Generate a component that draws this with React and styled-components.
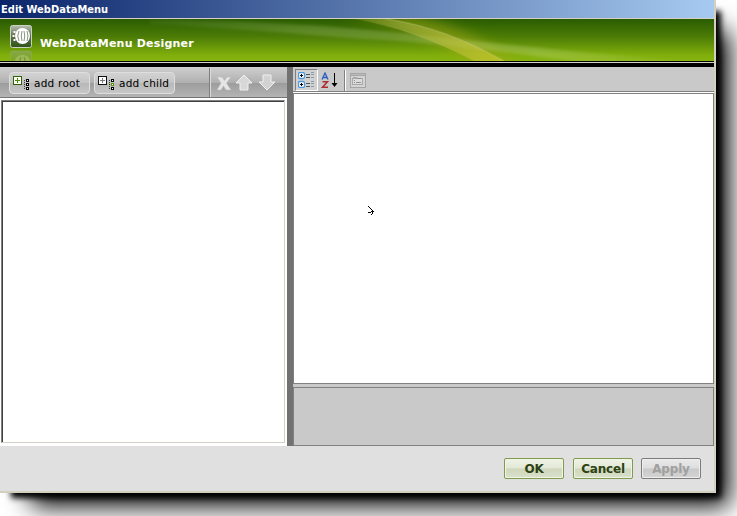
import React from "react";
import styled, { createGlobalStyle, css } from "styled-components";

const Global = createGlobalStyle`
  * { box-sizing: border-box; }
  body { margin: 0; background: #fff; overflow: hidden; font-family: "DejaVu Sans", Verdana, sans-serif; }
  svg { display: block; flex: none; }
`;

const Screen = styled.div`
  width: 737px;
  height: 516px;
  overflow: hidden;
`;

const Window = styled.main`
  width: 716px;
  height: 493px;
  display: flex;
  flex-direction: column;
  border: solid #d4d0c0;
  border-width: 0 2px 2px 0;
  background: #e0e0e0;
  box-shadow: 8px 8px 6px -3px #000, 22px 22px 24px -9px #000;
`;

const TitleBar = styled.header`
  height: 19px;
  flex: none;
  padding-left: 1px;
  border-bottom: 1px solid #d4d0c8;
  background: linear-gradient(90deg, #0a246a, #a6caf0);
  color: #fff;
  font: bold 11px/19px "DejaVu Sans Condensed", "DejaVu Sans", sans-serif;
  font-stretch: condensed;
  letter-spacing: 0.03px;
  white-space: nowrap;
`;

const Banner = styled.section`
  height: 42px;
  flex: none;
  display: grid;
  overflow: hidden;
  background: linear-gradient(#2a5c02, #4c7c06 42%, #80ae0c 86%, #86b30f);
  > * { grid-area: 1 / 1; }
`;

const BannerContent = styled.div`
  display: flex;
  gap: 7px;
  padding: 6px 0 0 9px;
`;

const BannerTitle = styled.h1`
  margin: 11px 0 0;
  color: #fff;
  font: bold 11px/16px "DejaVu Sans", sans-serif;
  letter-spacing: 0.21px;
  white-space: nowrap;
`;

const Rule = styled.div`
  height: 6px;
  flex: none;
  background: linear-gradient(#000 1px, #d4d0c8 1px 2px, #000 2px);
`;

const Workspace = styled.div`
  height: 379px;
  flex: none;
  display: grid;
  grid-template-columns: 287px 6px 421px;
`;

const TreePane = styled.section`
  display: flex;
  flex-direction: column;
  background: #fff;
`;

const TreeToolbar = styled.div`
  height: 31px;
  flex: none;
  display: flex;
  align-items: center;
  padding: 1px 0 0 9px;
  border-bottom: 1px solid #757575;
  background: linear-gradient(#cfcfcf, #b0b0b0 52%, #9c9c9c 53%, #b4b4b4);
`;

const TreeButton = styled.button`
  width: 81px;
  height: 22px;
  margin: 0 4px 0 0;
  padding: 0 0 0 3px;
  display: flex;
  align-items: center;
  gap: 4px;
  border: 1px solid #dedede;
  border-radius: 4px;
  background: linear-gradient(#d2d2d2, #c4c4c4 50%, #b8b8b8 52%, #c6c6c6);
  color: #000;
  font: 10.5px/20px "DejaVu Sans", sans-serif;
  letter-spacing: 0.25px;
  white-space: nowrap;
`;

const ToolDivider = styled.i`
  width: 2px;
  height: 29px;
  margin: 0 6px 0 30px;
  background: linear-gradient(90deg, #7e7e7e 50%, #dadada 50%);
`;

const TreeArea = styled.div`
  width: 284px;
  height: 343px;
  margin: 2px 0 0 1px;
  border: 1px solid;
  border-color: #808080 #d4d0c8 #d4d0c8 #808080;
  box-shadow: inset 1px 1px #404040;
`;

const Splitter = styled.div`
  background: #727272;
`;

const PropertyPane = styled.section`
  display: flex;
  flex-direction: column;
  background: #c9c9c9;
`;

const PropertyToolbar = styled.div`
  height: 26px;
  flex: none;
  display: flex;
  padding: 2px 0 0 2px;
  border-bottom: 1px solid #fff;
  box-shadow: inset 0 -1px #808080;
`;

const ToolSlot = styled.span`
  width: 23px;
  height: 22px;
  display: flex;
  align-items: center;
  justify-content: center;
  ${(p) =>
    p.$pressed &&
    css`
      border: 1px solid;
      border-color: #808080 #fff #fff #808080;
      background: #d1d1d1;
    `}
`;

const PropertyDivider = styled.i`
  width: 2px;
  height: 21px;
  margin: 1px 0 0 3px;
  background: linear-gradient(90deg, #808080 50%, #fff 50%);
`;

const PropertyGrid = styled.div`
  height: 291px;
  padding: 112px 0 0 74px;
  border: 1px solid #808080;
  background: #fff;
`;

const Description = styled.div`
  height: 59px;
  margin-top: 3px;
  border: 1px solid #808080;
`;

const Footer = styled.footer`
  flex: 1;
  display: flex;
  justify-content: flex-end;
  padding: 12px 13px 0 0;
`;

const FooterButton = styled.button`
  width: 60px;
  height: 21px;
  margin-left: ${(p) => p.$gap || 0}px;
  padding: 0;
  border: 1px solid ${(p) => (p.disabled ? "#7c7c7c" : "#809a50")};
  border-radius: 2px;
  background: ${(p) =>
    p.disabled
      ? "linear-gradient(#e9e9e9, #dedede 48%, #c9c9c9 52%, #d4d4d4)"
      : "linear-gradient(#f0f3e7, #e2e7d6 48%, #ced6bb 52%, #dbe1cd)"};
  box-shadow: inset 0 0 0 1px ${(p) => (p.disabled ? "#eee" : "#f0f4e4")};
  color: ${(p) => (p.disabled ? "#a0a0a0" : "#2c4212")};
  font: bold 12px/18px "DejaVu Sans", sans-serif;
  letter-spacing: -0.18px;
`;

function Swoosh() {
  return (
    <svg width="714" height="42" viewBox="0 0 714 42">
      <defs>
        <linearGradient id="gold" x1="350" y1="0" x2="500" y2="42" gradientUnits="userSpaceOnUse">
          <stop offset="0" stopColor="#c4c448" stopOpacity=".15" />
          <stop offset=".35" stopColor="#b8bc50" stopOpacity=".45" />
          <stop offset=".7" stopColor="#bcc03c" stopOpacity=".6" />
          <stop offset="1" stopColor="#c4c628" stopOpacity=".75" />
        </linearGradient>
        <linearGradient id="mist" x1="150" y1="0" x2="700" y2="0" gradientUnits="userSpaceOnUse">
          <stop offset="0" stopColor="#c8dca0" stopOpacity=".06" />
          <stop offset=".3" stopColor="#c8dca0" stopOpacity=".22" />
          <stop offset=".7" stopColor="#d8e8a8" stopOpacity=".26" />
          <stop offset="1" stopColor="#d8e8a8" stopOpacity="0" />
        </linearGradient>
        <filter id="soft" x="-10%" y="-50%" width="120%" height="200%">
          <feGaussianBlur stdDeviation="1.8" />
        </filter>
        <filter id="glow" x="-30%" y="-50%" width="160%" height="200%">
          <feGaussianBlur stdDeviation="7" />
        </filter>
      </defs>
      <path d="M340 -5 C400 5 445 22 480 48 L520 48 C480 17 440 2 404 -5Z" fill="#a2aa12" opacity=".6" filter="url(#glow)" />
      <path d="M150 0 C230 2 310 5 370 11 C430 17 500 25 560 31 C610 36 660 39 700 44 L590 44 C530 37 460 27 400 22 C320 18 240 9 150 5Z" fill="url(#mist)" filter="url(#soft)" />
      <path d="M355 0 C395 7 436 22 474 42 L504 42 C464 20 428 6 386 0Z" fill="url(#gold)" />
      <path d="M386 0 C428 6 464 20 504 42" fill="none" stroke="#d9dda0" strokeOpacity=".25" strokeWidth="1.5" />
    </svg>
  );
}

function Logo() {
  return (
    <svg width="24" height="36" viewBox="0 0 24 36">
      <defs>
        <linearGradient id="tile" x1="0" y1="0" x2="0" y2="1">
          <stop offset="0" stopColor="#b6beb0" />
          <stop offset=".5" stopColor="#5b704c" />
          <stop offset="1" stopColor="#2e5416" />
        </linearGradient>
        <linearGradient id="fade" x1="0" y1="0" x2="0" y2="1">
          <stop offset="0" stopColor="#8fa86e" stopOpacity=".65" />
          <stop offset="1" stopColor="#5a8212" stopOpacity=".15" />
        </linearGradient>
      </defs>
      <rect x="1.5" y=".5" width="21" height="22" rx="2" fill="url(#tile)" stroke="#cbd2c3" />
      <ellipse cx="13.5" cy="11" rx="7.5" ry="8" fill="#fff" />
      <path d="M10 6q-2.500 5 0 10M13 6q-1.500 5 0 10M15 6q1.500 5 0 10M18 6q2 5 0 10" fill="none" stroke="#788670" strokeWidth=".9" />
      <path d="M5.500 6v2M3.500 11h2M5.500 14v2" fill="none" stroke="#fff" strokeWidth="2" />
      <rect x="1.500" y="26" width="21" height="21" rx="2" fill="url(#fade)" stroke="#94b052" strokeOpacity=".55" />
      <path d="M6 36c1-8 14-8 15 0" fill="#b3c777" fillOpacity=".55" />
      <path d="M11 36q0-3 1-4M16 36q0-3-1-4" fill="none" stroke="#698c28" />
    </svg>
  );
}

function NodeIcon({ child }) {
  return (
    <svg width="17" height="18" viewBox="0 -1 17 18" shapeRendering="crispEdges">
      <rect x="0" y="1" width="9" height="9" fill={child ? "#111" : "#2d6500"} />
      <rect x="1" y="2" width="7" height="7" fill="#fff" />
      <path d="M2 5h5v1H2zM4 3h1v5H4z" fill={child ? "#777" : "#4e8800"} />
      <path d="M11 5h1v1h-1zM11 7h1v1h-1zM11 9h1v1h-1zM11 11h1v1h-1zM11 13h1v1h-1z" fill="#333" />
      {[4, 8, 12].map((y, i) => (
        <g key={y}>
          <rect x="13" y={y} width="3" height="3" fill={child && i === 1 ? "#5c9400" : "#000"} />
          <rect x="14" y={y + 1} width="1" height="1" fill="#fff" />
        </g>
      ))}
    </svg>
  );
}

function TreeActions() {
  return (
    <svg width="62" height="20" viewBox="0 0 62 20">
      <path d="M0 4h5l2.500 3.500L10 4h4l-4.500 6 4.500 7H9L6.500 13 4 17H0l4-7z" fill="#e4e6e6" stroke="#b8b8b8" strokeWidth=".5" />
      <path d="M27 2l8 8h-4v7h-8v-7h-4z" fill="#d8d8d8" stroke="#f0f0f0" />
      <path d="M46 2h8v7h4l-8 8-8-8h4z" fill="#d2d2d2" stroke="#f0f0f0" />
    </svg>
  );
}

function CategoryIcon() {
  return (
    <svg width="17" height="16" viewBox="0 0 17 16">
      {[0, 9].map((y) => (
        <g key={y}>
          <rect x=".5" y={y + 0.5} width="6" height="6" rx="1.500" fill="#fff" stroke="#4d98df" strokeWidth="1.3" />
          <path d={`M2 ${y + 3.5}h3M3.500 ${y + 2}v3`} stroke="#000" />
          <path d={`M8 ${y + 2.5}h4M8 ${y + 5.5}h4`} stroke="#555" />
          <path d={`M13 ${y + 0.5}h3M13 ${y + 2.5}h3M13 ${y + 5.5}h3`} stroke="#8c9cab" />
        </g>
      ))}
    </svg>
  );
}

function SortIcon() {
  return (
    <svg width="18" height="17" viewBox="0 0 18 17">
      <path d="M1 7.500L4 1l3 6.500M2.500 5.500h3.500" fill="none" stroke="#295dc4" strokeWidth="1.300" />
      <path d="M1.500 9.700h5l-5 5.600H7" fill="none" stroke="#ae2c31" strokeWidth="1.500" />
      <path d="M13.500 1v13" stroke="#000" />
      <path d="M10.500 11h6l-3 4z" />
    </svg>
  );
}

function PagesIcon() {
  return (
    <svg width="16" height="15" viewBox="0 0 16 15" shapeRendering="crispEdges">
      <rect width="16" height="15" fill="#a5a5a5" />
      <rect x="1" y="1" width="14" height="1" fill="#bcbcbc" />
      <rect x="1" y="3" width="14" height="11" fill="#d4d4d4" />
      <path d="M2 5h1V4h4v1h6v7H2z" fill="#a8a8a8" />
      <path d="M3 6h9v5H3z" fill="#dedede" />
      <path d="M7 5h4v1H7zM4 7h1v1H4zM4 9h1v1H4zM6 9h5v1H6z" fill="#909090" />
    </svg>
  );
}

function Cursor() {
  return (
    <svg width="7" height="10" viewBox="0 0 7 10" shapeRendering="crispEdges">
      <path d="M0 0h1v1H0zM1 1h1v1H1zM2 2h1v1H2zM3 3h1v1H3zM4 4h1v1h1v1H5v1H4V6H3V5h1zM0 6h3v1H0zM4 7h1v1H4zM3 8h1v1H3z" />
    </svg>
  );
}

export default function App() {
  return (
    <Screen>
      <Global />
      <Window>
        <TitleBar>Edit WebDataMenu</TitleBar>
        <Banner>
          <Swoosh />
          <BannerContent>
            <Logo />
            <BannerTitle>WebDataMenu Designer</BannerTitle>
          </BannerContent>
        </Banner>
        <Rule />
        <Workspace>
          <TreePane>
            <TreeToolbar>
              <TreeButton><NodeIcon />add root</TreeButton>
              <TreeButton><NodeIcon child />add child</TreeButton>
              <ToolDivider />
              <TreeActions />
            </TreeToolbar>
            <TreeArea />
          </TreePane>
          <Splitter />
          <PropertyPane>
            <PropertyToolbar>
              <ToolSlot $pressed><CategoryIcon /></ToolSlot>
              <ToolSlot><SortIcon /></ToolSlot>
              <PropertyDivider />
              <ToolSlot><PagesIcon /></ToolSlot>
            </PropertyToolbar>
            <PropertyGrid><Cursor /></PropertyGrid>
            <Description />
          </PropertyPane>
        </Workspace>
        <Footer>
          <FooterButton>OK</FooterButton>
          <FooterButton $gap={9}>Cancel</FooterButton>
          <FooterButton $gap={8} disabled>Apply</FooterButton>
        </Footer>
      </Window>
    </Screen>
  );
}
